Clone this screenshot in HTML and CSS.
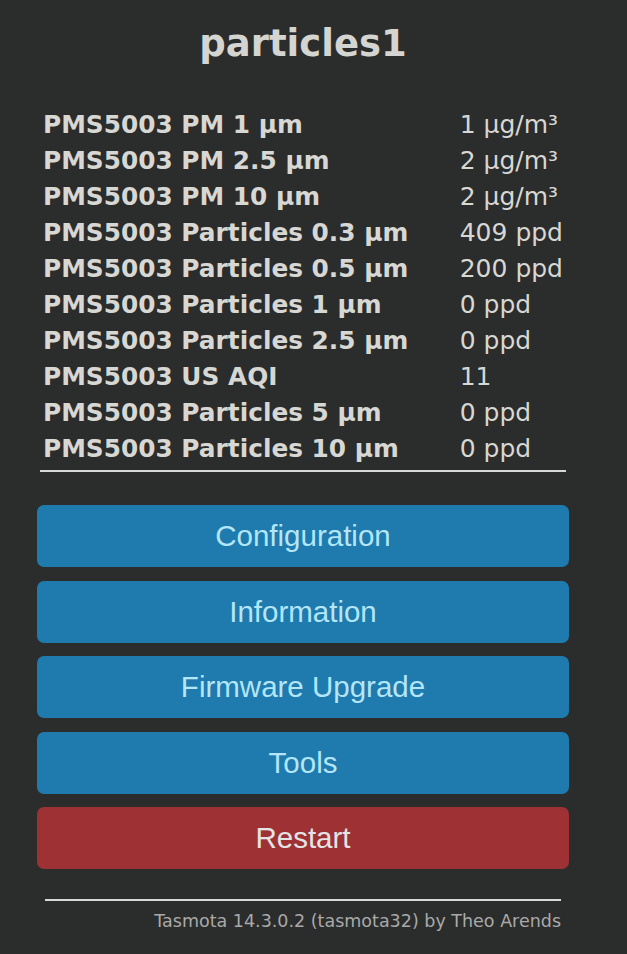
FILE: index.html
```html
<!DOCTYPE html>
<html lang="en">
<head>
    <meta charset="UTF-8">
    <meta name="viewport" content="width=device-width, initial-scale=1.0">
    <title>particles1 - Main Menu</title>
    <link rel="stylesheet" href="styles.css">
</head>
<body>
    <div class="page">
        <h2 class="device-name">particles1</h2>

        <table class="sensors">
            <tr><th>PMS5003 PM 1 µm</th><td>1 µg/m³</td></tr>
            <tr><th>PMS5003 PM 2.5 µm</th><td>2 µg/m³</td></tr>
            <tr><th>PMS5003 PM 10 µm</th><td>2 µg/m³</td></tr>
            <tr><th>PMS5003 Particles 0.3 µm</th><td>409 ppd</td></tr>
            <tr><th>PMS5003 Particles 0.5 µm</th><td>200 ppd</td></tr>
            <tr><th>PMS5003 Particles 1 µm</th><td>0 ppd</td></tr>
            <tr><th>PMS5003 Particles 2.5 µm</th><td>0 ppd</td></tr>
            <tr><th>PMS5003 US AQI</th><td>11</td></tr>
            <tr><th>PMS5003 Particles 5 µm</th><td>0 ppd</td></tr>
            <tr><th>PMS5003 Particles 10 µm</th><td>0 ppd</td></tr>
        </table>
        <div class="sensors-rule"></div>

        <div class="menu">
            <button type="button" class="btn">Configuration</button>
            <button type="button" class="btn">Information</button>
            <button type="button" class="btn">Firmware Upgrade</button>
            <button type="button" class="btn">Tools</button>
            <button type="button" class="btn btn-red">Restart</button>
        </div>

        <div class="footer">
            <hr class="footer-rule">
            <p class="footer-text">Tasmota 14.3.0.2 (tasmota32) by Theo Arends</p>
        </div>
    </div>
</body>
</html>
```

FILE: styles.css
```css
body {
    margin: 0;
    padding: 0;
    background-color: #2b2c2c;
    color: #d7d7d3;
    font-family: "DejaVu Sans", Verdana, sans-serif;
}

.page {
    width: 532px;
    margin-left: 37px;
    padding-top: 17px;
}

.device-name {
    margin: 3px 0 39px 0;
    text-align: center;
    font-size: 37px;
    line-height: 48px;
    font-weight: bold;
    color: #d4d4d0;
}

.sensors {
    width: 526px;
    margin-left: 3px;
    border-collapse: collapse;
    font-size: 24.8px;
}

.sensors th,
.sensors td {
    padding: 0 3px;
    height: 36px;
    line-height: 36px;
    text-align: left;
    white-space: nowrap;
}

.sensors th {
    width: 412px;
    font-weight: bold;
}

.sensors td {
    font-size: 25px;
}

.sensors-rule {
    margin: 3px 0 0 3px;
    width: 526px;
    height: 2px;
    background-color: #d8d8d8;
}

.menu {
    display: flex;
    flex-direction: column;
    gap: 13.5px;
    margin-top: 33px;
}

.btn {
    height: 62px;
    border: none;
    border-radius: 7px;
    background-color: #1f7aad;
    color: #b3e6f7;
    font-family: "Liberation Sans", Arial, sans-serif;
    font-size: 29.5px;
    cursor: pointer;
}

.btn-red {
    background-color: #9d3134;
    color: #e4e4e4;
}

.footer {
    margin: 30px 0 0 8px;
    width: 516px;
}

.footer-rule {
    margin: 0;
    border: none;
    height: 2px;
    background-color: #d8d8d8;
}

.footer-text {
    margin: 10px 0 0 0;
    text-align: right;
    font-size: 17.5px;
    color: #a9a9a9;
}
```
